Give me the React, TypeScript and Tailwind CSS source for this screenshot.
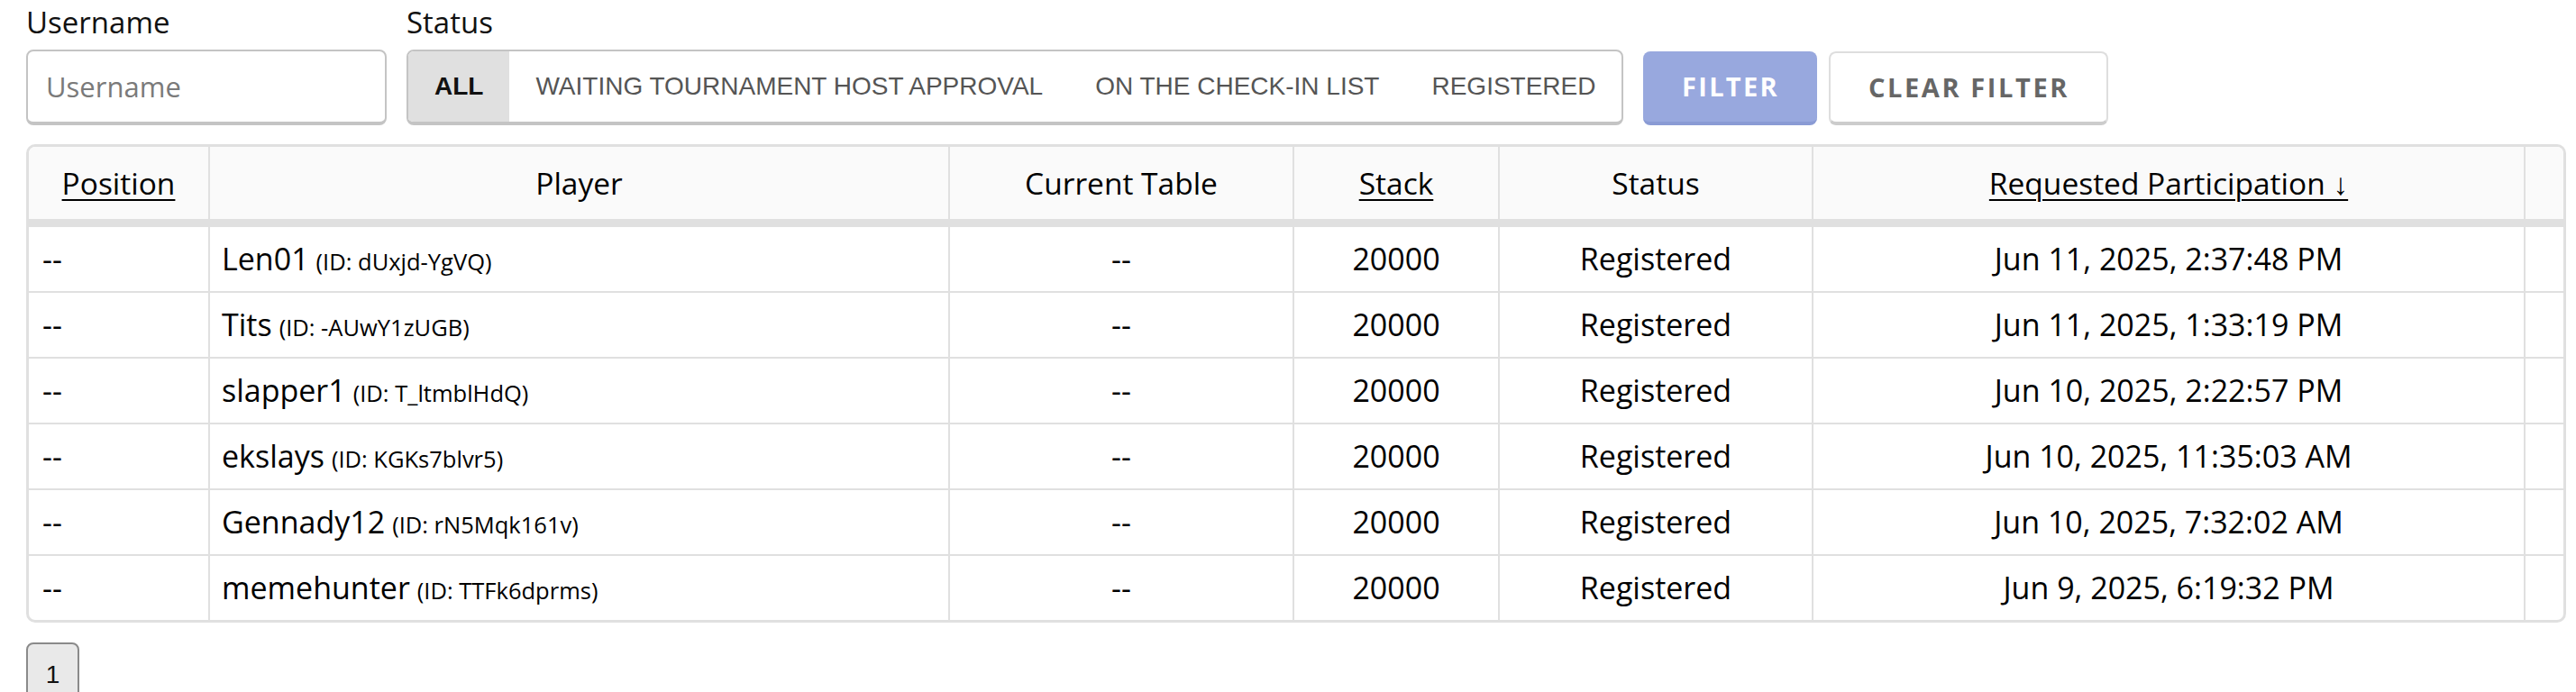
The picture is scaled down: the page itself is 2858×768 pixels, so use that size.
import React from "react"

// Participants list: filter bar on top, table of registrations, pager below.

type Participant = {
  name: string
  id: string
  requested: string
}

const participants: Participant[] = [
  { name: "Len01", id: "dUxjd-YgVQ", requested: "Jun 11, 2025, 2:37:48 PM" },
  { name: "Tits", id: "-AUwY1zUGB", requested: "Jun 11, 2025, 1:33:19 PM" },
  { name: "slapper1", id: "T_ltmblHdQ", requested: "Jun 10, 2025, 2:22:57 PM" },
  { name: "ekslays", id: "KGKs7blvr5", requested: "Jun 10, 2025, 11:35:03 AM" },
  { name: "Gennady12", id: "rN5Mqk161v", requested: "Jun 10, 2025, 7:32:02 AM" },
  { name: "memehunter", id: "TTFk6dprms", requested: "Jun 9, 2025, 6:19:32 PM" },
]

const statusTabs = [
  "WAITING TOURNAMENT HOST APPROVAL",
  "ON THE CHECK-IN LIST",
  "REGISTERED",
]

const ROW = "grid grid-cols-[201px_821px_382px_228px_348px_790px_1fr]"
const CELL = "flex items-center border-r-2 border-[#e0e0e0]"

function SortLabel({ children }: { children: React.ReactNode }) {
  return <span className="underline decoration-2 underline-offset-[5px]">{children}</span>
}

function FilterBar() {
  return (
    <div className="flex items-end">
      <div className="flex flex-col">
        <label className="text-[33px] leading-[40px] text-[#111]">Username</label>
        <input
          placeholder="Username"
          className="mt-[10px] h-[84px] w-[400px] rounded-lg border-2 border-b-4 border-[#c4c4c4] bg-white pl-[20px] text-[31px] text-[#111] outline-none placeholder:text-[#7a7a7a]"
        />
      </div>

      <div className="ml-[22px] flex flex-col">
        <span className="text-[33px] leading-[40px] text-[#111]">Status</span>
        <div className="mt-[10px] flex h-[84px] overflow-hidden rounded-lg border-2 border-b-4 border-[#c4c4c4] bg-white font-['Liberation_Sans',Arial,sans-serif]">
          <button className="flex items-center bg-[#e0e0e0] px-[29px] text-[28px] font-bold text-[#111]">
            ALL
          </button>
          {statusTabs.map((tab) => (
            <button
              key={tab}
              className="flex items-center px-[29px] text-[28px] text-[#555]"
            >
              {tab}
            </button>
          ))}
        </div>
      </div>

      <button className="ml-[22px] flex h-[82px] w-[193px] items-center justify-center rounded-lg border-b-4 border-[#8a9bd4] bg-[#98a8de] text-[29px] font-bold tracking-[0.08em] text-white">
        FILTER
      </button>
      <button className="ml-[13px] flex h-[82px] w-[310px] items-center justify-center rounded-lg border-2 border-b-4 border-[#dedede] border-b-[#cccccc] bg-white text-[29px] font-bold tracking-[0.09em] text-[#666]">
        CLEAR FILTER
      </button>
    </div>
  )
}

function ParticipantsTable() {
  return (
    <div className="mt-[21px] w-[2818px] overflow-hidden rounded-[10px] border-[3px] border-[#e0e0e0] text-[34px] text-black">
      <div className={`${ROW} border-b-[9px] border-[#e0e0e0] bg-[#fafafa] text-[33.5px]`}>
        <div className={`${CELL} h-[80px] justify-center`}>
          <SortLabel>Position</SortLabel>
        </div>
        <div className={`${CELL} justify-center`}>Player</div>
        <div className={`${CELL} justify-center`}>Current Table</div>
        <div className={`${CELL} justify-center`}>
          <SortLabel>Stack</SortLabel>
        </div>
        <div className={`${CELL} justify-center`}>Status</div>
        <div className={`${CELL} justify-center`}>
          <SortLabel>Requested Participation ↓</SortLabel>
        </div>
        <div />
      </div>

      {participants.map((p, i) => (
        <div
          key={p.id}
          className={`${ROW} ${i < participants.length - 1 ? "border-b-2 border-[#e0e0e0]" : ""}`}
        >
          <div className={`${CELL} h-[71px] pl-[15px]`}>--</div>
          <div className={`${CELL} pl-[13px]`}>
            <span>
              {p.name}
              <span className="ml-[8px] text-[25.5px]">(ID: {p.id})</span>
            </span>
          </div>
          <div className={`${CELL} justify-center`}>--</div>
          <div className={`${CELL} justify-center`}>20000</div>
          <div className={`${CELL} justify-center`}>Registered</div>
          <div className={`${CELL} justify-center`}>{p.requested}</div>
          <div />
        </div>
      ))}
    </div>
  )
}

export default function App() {
  return (
    <div className="min-h-screen bg-white pl-[29px] pt-[5px] font-['Open_Sans','Noto_Sans',sans-serif]">
      <FilterBar />
      <ParticipantsTable />
      <div className="mt-[22px] flex">
        <button className="h-[72px] w-[59px] rounded-lg border-2 border-[#8a8a8a] bg-[#e9e9e9] font-['Liberation_Sans',Arial,sans-serif] text-[28px] text-[#111]">
          1
        </button>
      </div>
    </div>
  )
}
